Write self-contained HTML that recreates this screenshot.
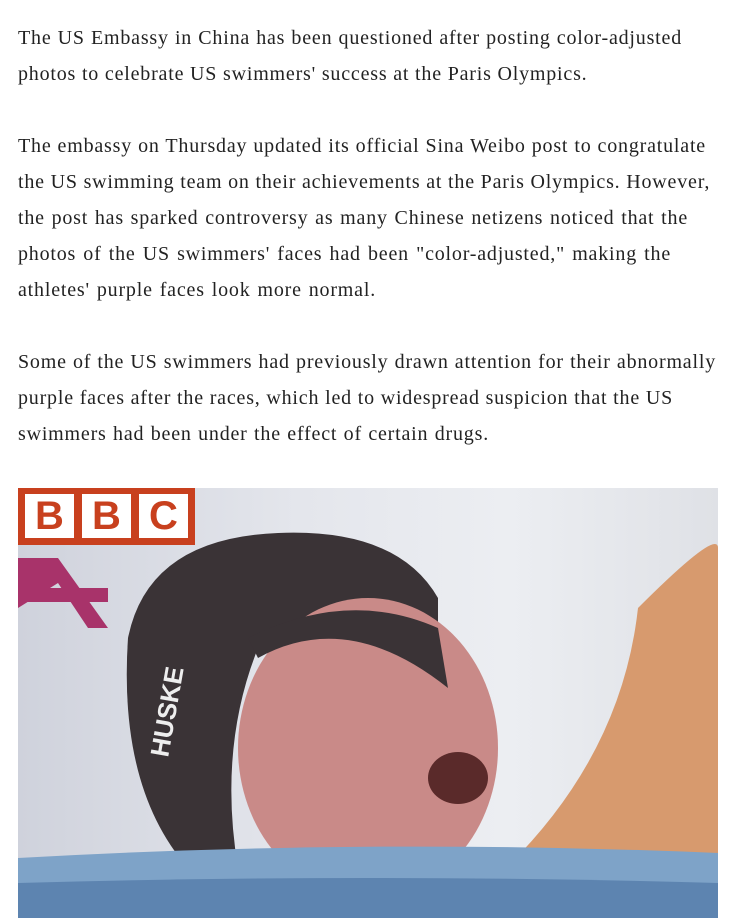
<!DOCTYPE html>
<html><head><meta charset="utf-8"><style>
body{margin:0;background:#fff;width:748px;height:918px;overflow:hidden;position:relative}
.t{position:absolute;left:18px;font-family:"Liberation Serif",serif;font-size:20px;letter-spacing:0.8px;color:#222;line-height:36px;height:36px;white-space:nowrap;text-align:justify;text-align-last:justify}
.img{position:absolute;left:18px;top:488px;width:700px;height:430px;overflow:hidden;background:linear-gradient(90deg,#cfd2dc 0%,#e4e6ec 40%,#eceef2 70%,#dfe1e6 100%)}
</style></head><body>
<div class="t" style="top:20px;width:664px">The US Embassy in China has been questioned after posting color-adjusted</div>
<div class="t" style="top:56px;width:569px">photos to celebrate US swimmers' success at the Paris Olympics.</div>
<div class="t" style="top:128px;width:688px">The embassy on Thursday updated its official Sina Weibo post to congratulate</div>
<div class="t" style="top:164px;width:686px">the US swimming team on their achievements at the Paris Olympics. However,</div>
<div class="t" style="top:200px;width:670px">the post has sparked controversy as many Chinese netizens noticed that the</div>
<div class="t" style="top:236px;width:653px">photos of the US swimmers' faces had been "color-adjusted," making the</div>
<div class="t" style="top:272px;width:358px">athletes' purple faces look more normal.</div>
<div class="t" style="top:344px;width:698px">Some of the US swimmers had previously drawn attention for their abnormally</div>
<div class="t" style="top:380px;width:655px">purple faces after the races, which led to widespread suspicion that the US</div>
<div class="t" style="top:416px;width:471px">swimmers had been under the effect of certain drugs.</div>
<div class="img">
<svg width="700" height="430" viewBox="0 0 700 430">
<polygon points="0,70 40,70 90,140 70,140 40,95 0,120" fill="#a8336a"/>
<rect x="0" y="100" width="90" height="14" fill="#a8336a"/>
<path d="M620,120 Q700,40 700,60 L700,430 L430,430 Q600,300 620,120Z" fill="#d79a6e"/>
<path d="M110,150 Q130,50 260,45 Q380,40 420,110 L420,200 Q330,120 240,160 Q200,260 220,380 L170,380 Q100,300 110,150Z" fill="#3a3336"/>
<ellipse cx="350" cy="260" rx="130" ry="150" fill="#c98a88"/>
<path d="M230,150 Q330,100 420,140 L430,200 Q330,120 240,170Z" fill="#3a3336"/>
<ellipse cx="440" cy="290" rx="30" ry="26" fill="#5a2a2a"/>
<path d="M0,370 Q350,350 700,365 L700,430 L0,430Z" fill="#7ea3c8"/>
<path d="M0,395 Q350,385 700,395 L700,430 L0,430Z" fill="#5d84b0"/>
<text x="150" y="270" transform="rotate(-80 150 270)" font-family="Liberation Sans,sans-serif" font-weight="bold" font-size="26" fill="#eee">HUSKE</text>
</svg>
<div style="position:absolute;left:0;top:0;width:177px;height:57px;background:#c8401e"></div>
<div style="position:absolute;left:7px;top:6px;width:49px;height:44px;background:#fff;color:#c8401e;font:bold 40px/44px 'Liberation Sans',sans-serif;text-align:center">B</div>
<div style="position:absolute;left:64px;top:6px;width:49px;height:44px;background:#fff;color:#c8401e;font:bold 40px/44px 'Liberation Sans',sans-serif;text-align:center">B</div>
<div style="position:absolute;left:121px;top:6px;width:49px;height:44px;background:#fff;color:#c8401e;font:bold 40px/44px 'Liberation Sans',sans-serif;text-align:center">C</div>
</div>
</body></html>
